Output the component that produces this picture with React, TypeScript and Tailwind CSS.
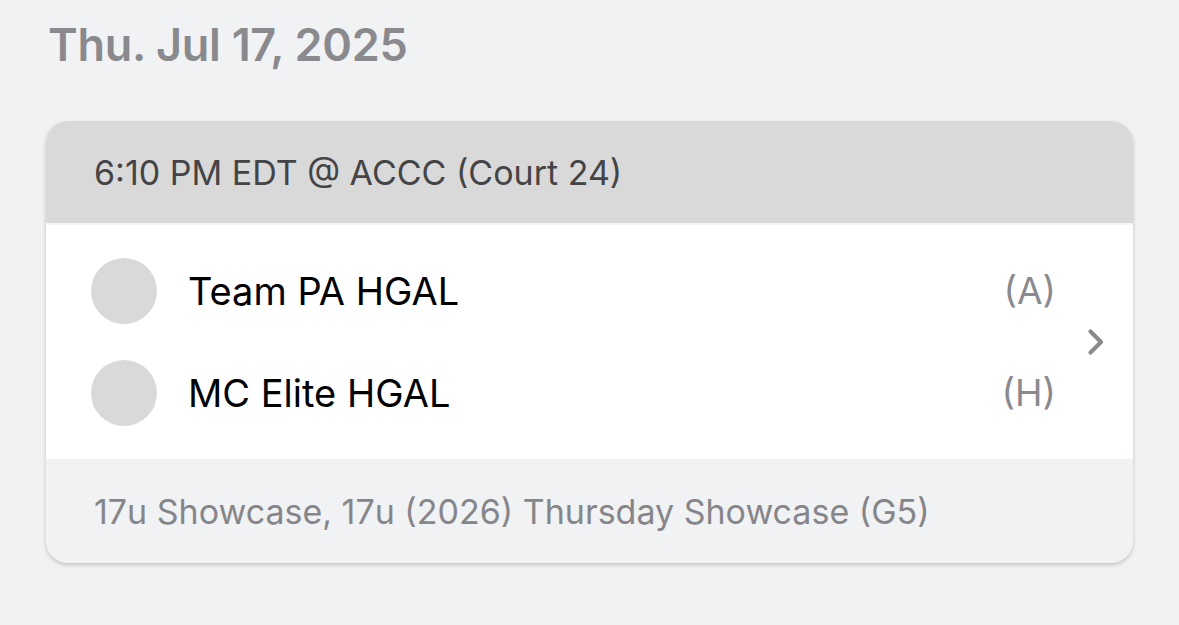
const teams = [
  { name: "Team PA HGAL", side: "(A)" },
  { name: "MC Elite HGAL", side: "(H)" },
];

const App = () => {
  return (
    <div className="min-h-[625px] w-full bg-[#f1f2f4] px-[46px] pt-[18px] font-['Inter',sans-serif]">
      <h1 className="pl-[2px] text-[45px] font-semibold leading-[54px] tracking-[-0.3px] text-[#8a8a8e]">
        Thu. Jul 17, 2025
      </h1>
      <div className="mt-[49px] w-[1087px] overflow-hidden rounded-[22px] shadow-[0_2px_4px_rgba(0,0,0,0.2)]">
        <div className="flex h-[102px] items-center bg-[#d9d9d9] px-[48px] text-[34px] text-[#444446]">
          6:10 PM EDT @ ACCC (Court 24)
        </div>
        <div className="flex items-center border-t-2 border-[#f6f6f6] bg-white">
          <div className="flex flex-1 flex-col py-[15px]">
            {teams.map((t) => (
              <div key={t.name} className="flex h-[102px] items-center pl-[45px] pr-[30px]">
                <div className="h-[66px] w-[66px] rounded-full bg-[#d9d9d9]" />
                <span className="ml-[31px] flex-1 text-[38px] text-black">{t.name}</span>
                <span className="text-[37px] text-[#8a8a8e]">{t.side}</span>
              </div>
            ))}
          </div>
          <svg width="20" height="28" viewBox="0 0 20 28" className="mr-[27px]" fill="none">
            <path d="M4.5 3.5 L15 14 L4.5 24.5" stroke="#8a8a8e" strokeWidth="4.2" strokeLinecap="round" strokeLinejoin="round" />
          </svg>
        </div>
        <div className="flex h-[104px] items-center bg-[#f1f2f4] px-[48px] text-[34px] text-[#86868a]">
          17u Showcase, 17u (2026) Thursday Showcase (G5)
        </div>
      </div>
    </div>
  );
};

export default App;
